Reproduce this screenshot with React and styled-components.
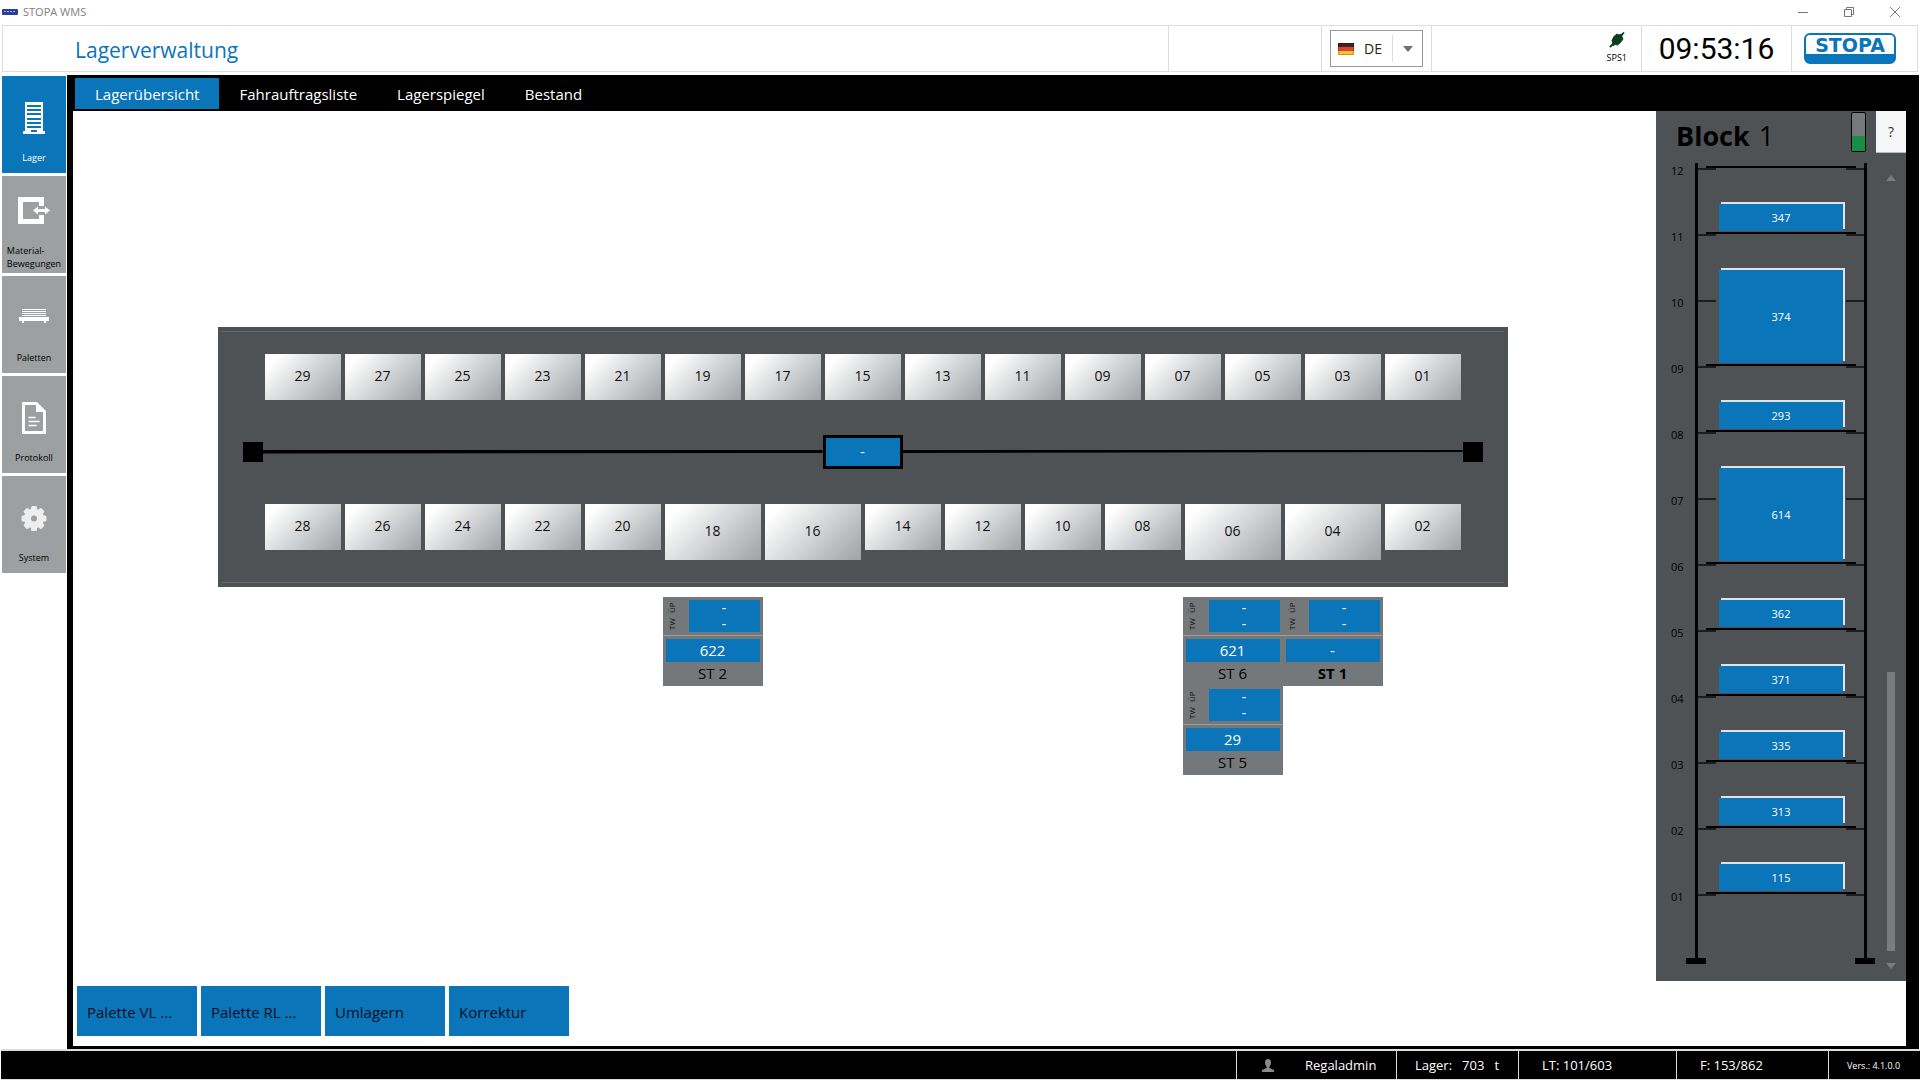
import styled, { createGlobalStyle } from "styled-components";

const colors = {
  blue: "#0b75ba",
  slate: "#4f5254",
  station: "#75787a",
  tile: "#9d9fa0",
  line: "#dddddd",
};

const topRow = ["29", "27", "25", "23", "21", "19", "17", "15", "13", "11", "09", "07", "05", "03", "01"];
const bottomRow = ["28", "26", "24", "22", "20", "18", "16", "14", "12", "10", "08", "06", "04", "02"];
const wideSlots = ["18", "16", "06", "04"];

const levels = ["12", "11", "10", "09", "08", "07", "06", "05", "04", "03", "02", "01"];

// row = grid row of the level that carries the pallet
const pallets = [
  { id: "347", row: 2, span: 1 },
  { id: "374", row: 4, span: 2 },
  { id: "293", row: 5, span: 1 },
  { id: "614", row: 7, span: 2 },
  { id: "362", row: 8, span: 1 },
  { id: "371", row: 9, span: 1 },
  { id: "335", row: 10, span: 1 },
  { id: "313", row: 11, span: 1 },
  { id: "115", row: 12, span: 1 },
];

const tabs = ["Lagerübersicht", "Fahrauftragsliste", "Lagerspiegel", "Bestand"];
const actions = ["Palette VL ...", "Palette RL ...", "Umlagern", "Korrektur"];

const LagerIcon = () => (
  <svg width="32" height="40" viewBox="0 0 32 40" shapeRendering="crispEdges">
    <path fill="#fff" d="M7 6h18v29h2v3H5v-3h2z" />
    <path
      stroke={colors.blue}
      strokeWidth="2"
      d="M9 10h14M9 14h14M9 18h14M9 23h14M9 27h14M9 31h14M13 35h6"
    />
  </svg>
);

const MaterialIcon = () => (
  <svg width="34" height="40" viewBox="0 0 34 40">
    <path fill="#fff" d="M1 1h26v9h-5V6H6v17h16v-4h5v9H1z" />
    <path
      fill="#fff"
      stroke={colors.tile}
      strokeWidth="2"
      paintOrder="stroke"
      d="M16 14.500l5-4v2.500h7v-2.500l5 4-5 4V16h-7v2.500z"
    />
  </svg>
);

const PalettenIcon = () => (
  <svg width="32" height="40" viewBox="0 0 32 40" shapeRendering="crispEdges">
    <path stroke="#fff" d="M4 13.500h24M4 15.500h24M4 17.500h24M4 19.500h24" />
    <path fill="#fff" d="M1 21h30v4h-3v2h-2v-2H6v2H4v-2H1z" />
  </svg>
);

const ProtokollIcon = () => (
  <svg width="32" height="40" viewBox="0 0 32 40">
    <path fill="#fff" fillRule="evenodd" d="M4 6h15l9 9v23H4zM7 9v26h18V16h-7V9z" />
    <path stroke="#fff" strokeWidth="1.500" d="M10.500 21.500h7M10.500 25.500h11M10.500 29.500h8" />
  </svg>
);

const SystemIcon = () => (
  <svg width="32" height="40" viewBox="0 0 32 40">
    <g fill="#eeeeee" transform="translate(16 22.500)">
      <circle r="6.500" fill="none" stroke="#eeeeee" strokeWidth="7" />
      {[0, 45, 90, 135, 180, 225, 270, 315].map((a) => (
        <rect key={a} x="-3" y="-12.500" width="6" height="5" rx="1.500" transform={`rotate(${a})`} />
      ))}
    </g>
  </svg>
);

const navItems = [
  { label: "Lager", icon: LagerIcon, active: true },
  { label: "Material-\nBewegungen", icon: MaterialIcon },
  { label: "Paletten", icon: PalettenIcon },
  { label: "Protokoll", icon: ProtokollIcon },
  { label: "System", icon: SystemIcon },
];

const GermanFlag = () => (
  <svg width="16" height="12" viewBox="0 0 16 12">
    <rect width="16" height="4" fill="#3a2320" />
    <rect y="4" width="16" height="4" fill="#d9432f" />
    <rect y="8" width="16" height="4" fill="#f8c12c" />
    <rect x="0.500" y="0.500" width="15" height="11" fill="none" stroke="#000" strokeOpacity="0.200" />
  </svg>
);

const PlugIcon = () => (
  <svg width="16" height="16" viewBox="0 0 16 16">
    <g fill="#0c3f1c" stroke="#0c3f1c">
      <path strokeWidth="1.800" d="M1 15l4-4M11 5l4-4.500" />
      <path strokeWidth="1" d="M5 4.500l3-2.500 2 1 2.500-1 .5 3 1 2-2.500 3.500-3 2.500-2-.5-2.500 1-.5-3-.5-2z" />
    </g>
  </svg>
);

const StopaLogo = () => (
  <svg width="92" height="31" viewBox="0 0 92 31" role="img" aria-label="STOPA">
    <rect x="1" y="1" width="90" height="29" rx="5" fill="#fff" stroke={colors.blue} strokeWidth="2" />
    <path fill={colors.blue} d="M1 21h90v4a5 5 0 0 1-5 5H6a5 5 0 0 1-5-5z" />
    <text
      x="46"
      y="19"
      textAnchor="middle"
      fontFamily="DejaVu Sans, sans-serif"
      fontWeight="700"
      fontSize="19"
      fill={colors.blue}
    >
      STOPA
    </text>
  </svg>
);

const UserIcon = () => (
  <svg width="12" height="13" viewBox="0 0 12 13">
    <path fill="#8a8a8a" d="M6 0c2 0 3 1.500 3 3.500S8 7 7.500 7.500v1.500L12 11v2H0v-2l4.500-2V7.500C4 7 3 5.500 3 3.500S4 0 6 0z" />
  </svg>
);

const Station = ({ value, name, bold }) => (
  <StationBox>
    <StationTop>
      <SideLabels>
        <span>TW</span>
        <span>ÜP</span>
      </SideLabels>
      <Slots>
        <span>-</span>
        <span>-</span>
      </Slots>
    </StationTop>
    <StationBottom>
      <StationValue>{value}</StationValue>
      <StationName $bold={bold}>{name}</StationName>
    </StationBottom>
  </StationBox>
);

const Slot = ({ id }) => (
  <SlotButton type="button" $wide={wideSlots.includes(id)}>
    {id}
  </SlotButton>
);

const App = () => {
  return (
    <Window>
      <GlobalStyle />
      <TitleBar>
        <svg width="16" height="6" viewBox="0 0 16 6">
          <rect width="16" height="6" rx="1" fill="#2a3f9c" />
          <path stroke="#aab4e0" d="M2 2.500h12" strokeDasharray="2 1" />
        </svg>
        <span>STOPA WMS</span>
        <WindowControls>
          <WindowButton type="button" aria-label="Minimieren">
            <svg width="10" height="10" viewBox="0 0 10 10" stroke="#777" fill="none">
              <path d="M0 5.500h10" />
            </svg>
          </WindowButton>
          <WindowButton type="button" aria-label="Wiederherstellen">
            <svg width="10" height="10" viewBox="0 0 10 10" stroke="#777" fill="none">
              <path d="M0.500 2.500h7v7h-7zM2.500 2.500v-2h7v7h-2" />
            </svg>
          </WindowButton>
          <WindowButton type="button" aria-label="Schließen">
            <svg width="10" height="10" viewBox="0 0 10 10" stroke="#777" fill="none">
              <path d="M0 0l10 10M10 0L0 10" />
            </svg>
          </WindowButton>
        </WindowControls>
      </TitleBar>

      <Header>
        <PageTitle>Lagerverwaltung</PageTitle>
        <HeaderCell $width={153} />
        <HeaderCell $width={110}>
          <LanguageBox>
            <GermanFlag />
            <LanguageSelect aria-label="Sprache" defaultValue="DE">
              <option>DE</option>
            </LanguageSelect>
            <SelectArrow>
              <svg width="10" height="6" viewBox="0 0 10 6">
                <path fill="#707070" d="M0 0h10L5 6z" />
              </svg>
            </SelectArrow>
          </LanguageBox>
        </HeaderCell>
        <HeaderCell $width={210} $end>
          <PlcState>
            <PlugIcon />
            SPS1
          </PlcState>
        </HeaderCell>
        <HeaderCell $width={150}>
          <Clock>09:53:16</Clock>
        </HeaderCell>
        <HeaderCell $width={126}>
          <LogoWrap>
            <StopaLogo />
          </LogoWrap>
        </HeaderCell>
      </Header>

      <Body>
        <Sidebar>
          {navItems.map(({ label, icon: Icon, active }) => (
            <NavButton key={label} type="button" $active={active}>
              <Icon />
              <NavLabel>{label}</NavLabel>
            </NavButton>
          ))}
        </Sidebar>

        <Frame>
          <TabBar>
            {tabs.map((tab, i) => (
              <Tab key={tab} type="button" $active={i === 0}>
                {tab}
              </Tab>
            ))}
          </TabBar>

          <Content>
            <Main>
              <Plan>
                <div>
                  <Warehouse>
                    <SlotRow>
                      {topRow.map((id) => (
                        <Slot key={id} id={id} />
                      ))}
                    </SlotRow>
                    <Track>
                      <Buffer />
                      <Rail $shape="0 0, 100% 13%, 100% 87%, 0 100%" />
                      <Carriage type="button">-</Carriage>
                      <Rail $shape="0 13%, 100% 13%, 100% 63%, 0 87%" />
                      <Buffer />
                    </Track>
                    <SlotRow>
                      {bottomRow.map((id) => (
                        <Slot key={id} id={id} />
                      ))}
                    </SlotRow>
                  </Warehouse>
                  <Stations>
                    <Station value="622" name="ST 2" />
                    <StationGroup>
                      <Station value="621" name="ST 6" />
                      <Station value="-" name="ST 1" bold />
                      <Station value="29" name="ST 5" />
                    </StationGroup>
                  </Stations>
                </div>
              </Plan>
              <Actions>
                {actions.map((action) => (
                  <ActionButton key={action} type="button">
                    {action}
                  </ActionButton>
                ))}
              </Actions>
            </Main>

            <BlockPanel>
              <BlockHeader>
                <BlockTitle>
                  <b>Block</b> 1
                </BlockTitle>
                <Gauge>
                  <GaugeFill />
                </Gauge>
                <HelpButton type="button">?</HelpButton>
              </BlockHeader>
              <BlockBody>
                <Rack>
                  {levels.map((level, i) => (
                    <LevelLabel key={level} $row={i + 1}>
                      {level}
                    </LevelLabel>
                  ))}
                  <Post $col={2} />
                  {levels.map((level, i) => (
                    <Brackets key={level} $row={i + 1} />
                  ))}
                  <Beam $row={1} />
                  {pallets.map(({ id, row }) => (
                    <Beam key={id} $row={row} />
                  ))}
                  {pallets.map(({ id, row, span }) => (
                    <Pallet key={id} type="button" $row={row} $span={span}>
                      {id}
                    </Pallet>
                  ))}
                  <Post $col={4} />
                </Rack>
                <ScrollTrack>
                  <svg width="10" height="6" viewBox="0 0 10 6">
                    <path fill="#7a7d7f" d="M0 6h10L5 0z" />
                  </svg>
                  <ScrollThumb />
                  <svg width="10" height="6" viewBox="0 0 10 6">
                    <path fill="#7a7d7f" d="M0 0h10L5 6z" />
                  </svg>
                </ScrollTrack>
              </BlockBody>
            </BlockPanel>
          </Content>
        </Frame>
      </Body>

      <StatusBar>
        <StatusCell $width={160} $left={25}>
          <UserIcon />
          <UserName>Regaladmin</UserName>
        </StatusCell>
        <StatusCell $width={122} $left={18}>
          <span>Lager:</span>
          <span>703</span>
          <span>t</span>
        </StatusCell>
        <StatusCell $width={158} $left={23}>
          LT: 101/603
        </StatusCell>
        <StatusCell $width={152} $left={23}>
          F: 153/862
        </StatusCell>
        <StatusCell $width={92} $left={18} $small>
          Vers.: 4.1.0.0
        </StatusCell>
      </StatusBar>
    </Window>
  );
};

export default App;

// Styled components
const GlobalStyle = createGlobalStyle`
  * {
    box-sizing: border-box;
  }

  body {
    margin: 0;
    background: #fff;
    font-family: "Open Sans", "Noto Sans", sans-serif;
    color: #000;
  }

  button, select {
    font-family: inherit;
    border: none;
    border-radius: 0;
    padding: 0;
    cursor: pointer;
  }
`;

const Window = styled.div`
  display: flex;
  flex-direction: column;
  min-height: 100vh;
`;

const TitleBar = styled.div`
  display: flex;
  align-items: center;
  gap: 5px;
  height: 25px;
  padding: 0 2px 2px;
  font-size: 11px;
  color: #808080;
`;

const WindowControls = styled.div`
  display: flex;
  margin-left: auto;
`;

const WindowButton = styled.button`
  display: flex;
  align-items: center;
  justify-content: center;
  width: 46px;
  height: 20px;
  background: transparent;
`;

const Header = styled.header`
  display: flex;
  height: 47px;
  margin: 0 2px 3px;
  border: 1px solid ${colors.line};
`;

const PageTitle = styled.h1`
  flex: 1;
  margin: 0;
  padding-left: 72px;
  font-size: 21px;
  font-weight: 400;
  line-height: 48px;
  color: ${colors.blue};
`;

const HeaderCell = styled.div`
  display: flex;
  align-items: center;
  justify-content: ${({ $end }) => ($end ? "flex-end" : "flex-start")};
  width: ${({ $width }) => $width}px;
  border-left: 1px solid ${colors.line};
`;

const LanguageBox = styled.div`
  display: flex;
  align-items: center;
  width: 93px;
  height: 37px;
  margin-left: 8px;
  padding-left: 7px;
  border: 1px solid #9a9a9a;
`;

const LanguageSelect = styled.select`
  flex: 1;
  appearance: none;
  padding-left: 10px;
  background: transparent;
  font-size: 14px;
  color: #222;
`;

const SelectArrow = styled.span`
  display: flex;
  align-items: center;
  justify-content: center;
  width: 30px;
  height: 27px;
  border-left: 1px solid ${colors.line};
  pointer-events: none;
`;

const PlcState = styled.div`
  display: flex;
  flex-direction: column;
  align-items: center;
  gap: 4px;
  margin: 0 14px 2px 0;
  font-size: 9px;
  line-height: 12px;
`;

const Clock = styled.time`
  flex: 1;
  text-align: center;
  font-family: Roboto, sans-serif;
  font-size: 30px;
  line-height: 46px;
`;

const LogoWrap = styled.div`
  display: flex;
  padding-left: 12px;
`;

const Body = styled.div`
  display: flex;
  flex: 1;
`;

const Sidebar = styled.nav`
  display: flex;
  flex-direction: column;
  gap: 3px;
  width: 67px;
  padding: 1px 1px 0 2px;
`;

const NavButton = styled.button`
  display: flex;
  flex-direction: column;
  align-items: center;
  height: 97px;
  padding-top: 20px;
  background: ${({ $active }) => ($active ? colors.blue : colors.tile)};
  color: ${({ $active }) => ($active ? "#fff" : "#000")};
`;

const NavLabel = styled.span`
  display: flex;
  align-items: center;
  height: 32px;
  margin-top: 5px;
  font-size: 9px;
  line-height: 13px;
  text-align: left;
  white-space: pre;
`;

const Frame = styled.main`
  display: flex;
  flex-direction: column;
  flex: 1;
  min-width: 0;
  margin-right: 1px;
  padding: 3px 13px 3px 6px;
  background: #000;
`;

const TabBar = styled.div`
  display: flex;
  padding: 0 2px 2px;
`;

const Tab = styled.button`
  height: 31px;
  padding: 0 20px;
  background: ${({ $active }) => ($active ? colors.blue : "transparent")};
  color: #fff;
  font-size: 15px;
  line-height: 20px;
`;

const Content = styled.div`
  display: flex;
  flex: 1;
  align-items: flex-start;
  background: #fff;
`;

const Main = styled.section`
  display: flex;
  flex-direction: column;
  flex: 1;
  align-self: stretch;
  min-width: 0;
  padding: 0 8px 10px 4px;
`;

const Plan = styled.div`
  display: flex;
  flex: 1;
  align-items: center;
  justify-content: center;
  padding-top: 4px;
`;

const Warehouse = styled.div`
  padding: 4px;
  background: ${colors.slate};

  &::before,
  &::after {
    content: "";
    display: block;
    height: 1px;
    background: #66696b;
  }

  &::before {
    margin-bottom: 22px;
  }

  &::after {
    margin-top: 22px;
  }
`;

const SlotRow = styled.div`
  display: flex;
  align-items: flex-start;
  justify-content: center;
  gap: 4px;
  padding: 0 43px;
`;

const SlotButton = styled.button`
  width: ${({ $wide }) => ($wide ? 96 : 76)}px;
  height: ${({ $wide }) => ($wide ? 56 : 46)}px;
  padding-bottom: 2px;
  background: linear-gradient(135deg, #ffffff 12%, #9fa3a5 100%);
  font-size: 14px;
  color: #111;
`;

const Track = styled.div`
  display: flex;
  align-items: center;
  height: 104px;
  padding: 0 21px;
`;

const Buffer = styled.div`
  width: 20px;
  height: 20px;
  background: #000;
`;

const Rail = styled.div`
  flex: 1;
  height: 4px;
  background: #000;
  clip-path: polygon(${({ $shape }) => $shape});
`;

const Carriage = styled.button`
  width: 80px;
  height: 34px;
  background: ${colors.blue};
  border: 3px solid #000;
  color: #fff;
  font-size: 14px;
`;

const Stations = styled.div`
  display: flex;
  align-items: flex-start;
  justify-content: space-between;
  padding: 10px 125px 0 445px;
`;

const StationGroup = styled.div`
  display: grid;
  grid-template-columns: 100px 100px;
`;

const StationBox = styled.div`
  width: 100px;
  background: ${colors.station};
`;

const StationTop = styled.div`
  display: flex;
  height: 38px;
  padding: 3px 3px 3px 4px;
`;

const SideLabels = styled.div`
  display: flex;
  justify-content: space-around;
  width: 22px;
  writing-mode: vertical-rl;
  transform: rotate(180deg);
  font-size: 8px;
  line-height: 10px;
  color: #111;
`;

const Slots = styled.div`
  display: flex;
  flex: 1;
  flex-direction: column;
  background: ${colors.blue};
  color: #fff;
  font-size: 14px;
  line-height: 16px;
  text-align: center;
`;

const StationBottom = styled.div`
  padding: 3px 3px 1px;
  border-top: 1px solid #a09f9c;
  font-size: 15px;
  text-align: center;
`;

const StationValue = styled.div`
  background: ${colors.blue};
  color: #fff;
  line-height: 23px;
`;

const StationName = styled.div`
  font-weight: ${({ $bold }) => ($bold ? 700 : 400)};
  line-height: 23px;
`;

const Actions = styled.div`
  display: flex;
  gap: 4px;
`;

const ActionButton = styled.button`
  width: 120px;
  height: 50px;
  padding: 2px 10px 0;
  background: ${colors.blue};
  color: #06101c;
  font-size: 15px;
  text-align: left;
`;

const BlockPanel = styled.aside`
  width: 250px;
  padding-bottom: 12px;
  background: ${colors.slate};
`;

const BlockHeader = styled.div`
  display: flex;
  align-items: flex-start;
`;

const BlockTitle = styled.h2`
  flex: 1;
  margin: 0;
  padding-left: 20px;
  font-size: 27px;
  font-weight: 400;
  line-height: 50px;

  b {
    margin-right: 2px;
  }
`;

const Gauge = styled.div`
  display: flex;
  align-items: flex-end;
  width: 15px;
  height: 40px;
  margin: 1px 10px 0 0;
  background: #75797c;
  border: 1px solid #000;
  border-radius: 2px;
`;

const GaugeFill = styled.div`
  width: 100%;
  height: 40%;
  background: #178d45;
`;

const HelpButton = styled.button`
  width: 30px;
  height: 42px;
  background: #f6f6f6;
  border-bottom: 1px solid #bbb;
  font-size: 14px;
  color: #333;
`;

const BlockBody = styled.div`
  display: flex;
  padding-top: 2px;
`;

const Rack = styled.div`
  display: grid;
  grid-template-columns: 39px 3px 166px 3px;
  grid-template-rows: repeat(12, 66px) 9px;
  margin-bottom: 5px;
`;

const LevelLabel = styled.span`
  grid-area: ${({ $row }) => $row} / 1;
  padding-left: 15px;
  font-size: 11px;
  line-height: 16px;
`;

const Post = styled.div`
  position: relative;
  grid-area: 1 / ${({ $col }) => $col} / -1;
  background: #000;

  &::after {
    content: "";
    position: absolute;
    bottom: 0;
    left: -9px;
    width: 20px;
    height: 6px;
    background: #000;
  }
`;

const Brackets = styled.div`
  grid-area: ${({ $row }) => $row} / 3;
  height: 2px;
  margin-top: 5px;
  background: linear-gradient(90deg, #1c1d1e 18px, transparent 18px calc(100% - 18px), #1c1d1e calc(100% - 18px));
`;

const Beam = styled.div`
  grid-area: ${({ $row }) => $row} / 3;
  justify-self: center;
  width: 150px;
  height: 2px;
  margin-top: 3px;
  background: #000;
`;

const Pallet = styled.button`
  grid-area: ${({ $row, $span }) => `${$row - $span} / 3 / ${$row}`};
  align-self: end;
  justify-self: center;
  width: 124px;
  height: ${({ $span }) => $span * 66 - 39}px;
  margin-bottom: -2px;
  background: ${colors.blue};
  box-shadow: 2px -2px 0 #dfe3e6;
  color: #fff;
  font-size: 11px;
`;

const ScrollTrack = styled.div`
  display: flex;
  flex: 1;
  flex-direction: column;
  align-items: center;
  padding: 12px 0 0 8px;
`;

const ScrollThumb = styled.div`
  width: 8px;
  height: 279px;
  margin: auto 0 12px;
  background: #7a7d7f;
`;

const StatusBar = styled.footer`
  display: flex;
  justify-content: flex-end;
  height: 31px;
  margin: 0 0 0 1px;
  border-top: 2px solid ${colors.line};
  border-bottom: 1px solid ${colors.line};
  background: #000;
`;

const StatusCell = styled.div`
  display: flex;
  align-items: center;
  gap: 10px;
  width: ${({ $width }) => $width}px;
  padding-left: ${({ $left }) => $left}px;
  border-left: 1px solid #ddd;
  color: #fff;
  font-size: ${({ $small }) => ($small ? 9 : 13)}px;
  white-space: nowrap;
`;

const UserName = styled.span`
  padding-left: 21px;
`;
